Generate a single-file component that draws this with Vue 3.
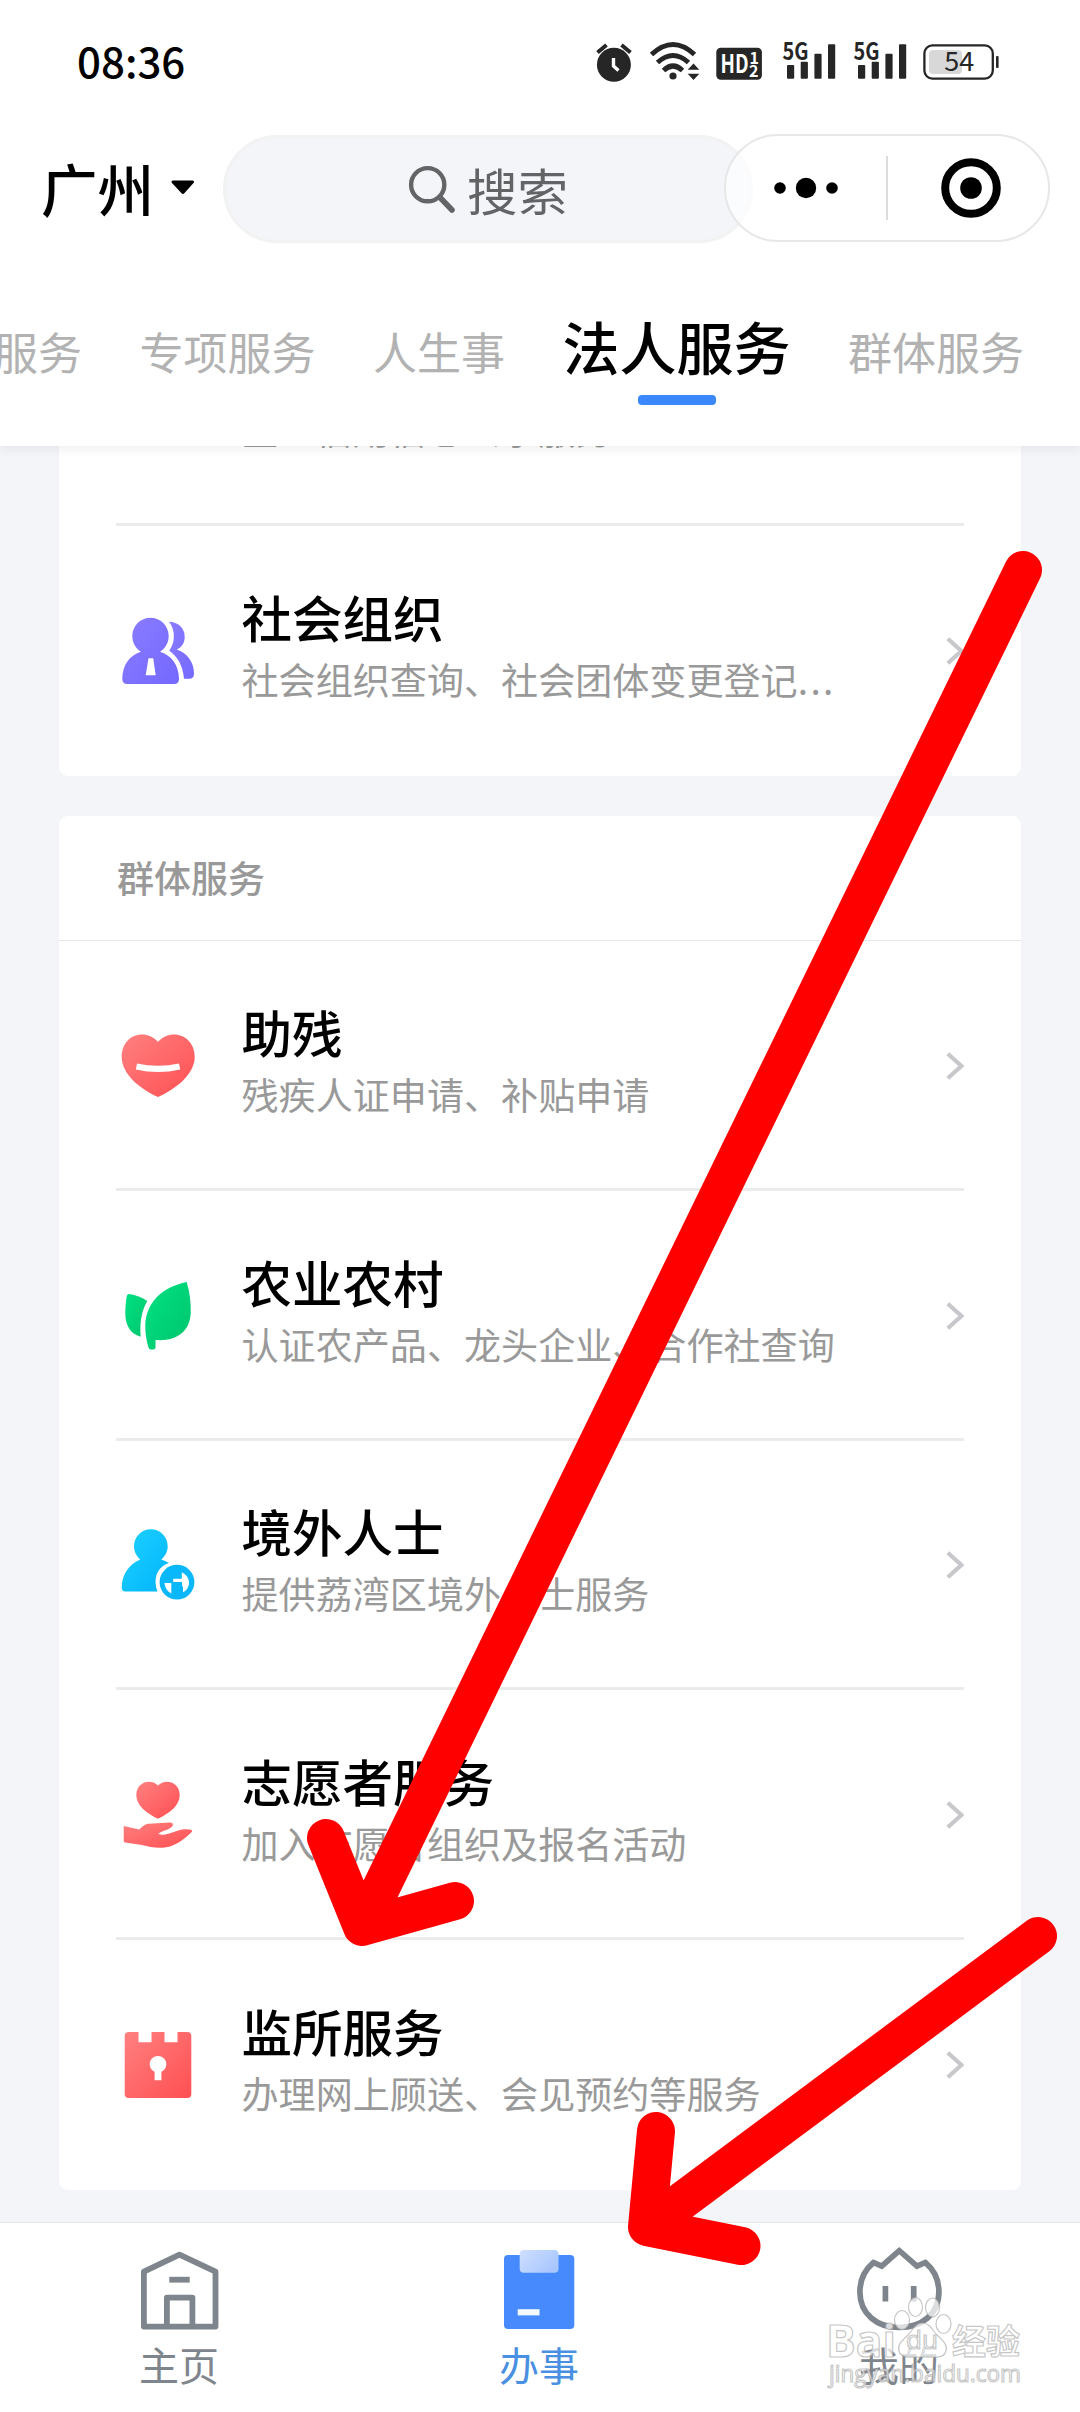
<script setup>
const tabs = [
  { name: '服务' },
  { name: '专项服务' },
  { name: '人生事' },
  { name: '法人服务', active: true },
  { name: '群体服务' },
]

const groups = [
  {
    items: [
      { title: '企业信用', desc: '企业信用信息公示服务' },
      { icon: 'org', title: '社会组织', desc: '社会组织查询、社会团体变更登记', more: true },
    ],
  },
  {
    title: '群体服务',
    items: [
      { icon: 'heart', title: '助残', desc: '残疾人证申请、补贴申请' },
      { icon: 'leaf', title: '农业农村', desc: '认证农产品、龙头企业、合作社查询' },
      { icon: 'abroad', title: '境外人士', desc: '提供荔湾区境外人士服务' },
      { icon: 'volunteer', title: '志愿者服务', desc: '加入志愿者组织及报名活动' },
      { icon: 'prison', title: '监所服务', desc: '办理网上顾送、会见预约等服务' },
    ],
  },
]
</script>

<template>
  <div class="screen">
    <header class="top">
      <div class="status">
        <span class="time">08:36</span>
        <svg class="status-icons" width="420" height="52" viewBox="590 36 420 52" fill="#262626">
          <circle cx="613.9" cy="64.7" r="17" />
          <path d="M597.5 52.5L606.5 45M630.5 52.5L621.5 45" stroke="#262626" stroke-width="4" fill="none" />
          <path d="M613.5 58V66L618.5 70.5" stroke="#fff" stroke-width="3.4" fill="none" />
          <g fill="none" stroke="#262626" stroke-width="5">
            <path d="M651.5 54.5Q673 34.5 694.5 54.5" />
            <path d="M657.5 62.5Q673 48.5 688.5 62.5" />
            <path d="M663.5 70.5Q673 61.5 682.5 70.5" />
          </g>
          <circle cx="673" cy="76" r="3.6" />
          <path d="M693.5 63.5L699.3 69.8H687.7ZM693.5 80L699.3 73.7H687.7Z" />
          <rect x="716.3" y="47.7" width="45.6" height="32" rx="4.5" />
          <g fill="#fff" font-weight="700">
            <text x="720.5" y="73.3" font-size="26" textLength="28" lengthAdjust="spacingAndGlyphs">HD</text>
            <text x="749.5" y="63.5" font-size="16">1</text>
            <text x="749" y="77" font-size="16">2</text>
          </g>
          <g v-for="dx in [0, 71]" :key="dx" :transform="`translate(${dx} 0)`">
            <text x="782.5" y="59.7" font-size="24" font-weight="700" textLength="26" lengthAdjust="spacingAndGlyphs">5G</text>
            <rect x="787" y="65" width="7.2" height="13.7" rx="1" />
            <rect x="800.7" y="61.7" width="7.2" height="17" rx="1" />
            <rect x="814.4" y="53.7" width="7.2" height="25" rx="1" />
            <rect x="828" y="44.3" width="7.2" height="34.4" rx="1" />
          </g>
          <rect x="929" y="50" width="33" height="24" rx="4" fill="#d8d8d8" />
          <rect x="924.4" y="45.4" width="68.4" height="33.2" rx="8" fill="none" stroke="#262626" stroke-width="2.3" />
          <rect x="996" y="56" width="2.6" height="12" rx="1" />
          <text x="959.3" y="71.3" font-size="27" text-anchor="middle">54</text>
        </svg>
      </div>

      <div class="nav">
        <span class="city">广州</span>
        <svg class="caret" width="24" height="15" viewBox="0 0 24 15"><path d="M2 0.5H21.5Q24 1 22.5 3L13.5 13Q12 15 10.3 13L1 3Q-0.5 1 2 0.5Z" fill="#000" /></svg>
        <div class="search">
          <svg width="48" height="48" viewBox="0 0 48 48" fill="none" stroke="#636466" stroke-linecap="round">
            <circle cx="19.7" cy="19.7" r="16.6" stroke-width="4.4" />
            <path d="M32.5 33L44 45" stroke-width="5.6" />
          </svg>
          <span>搜索</span>
        </div>
        <div class="capsule">
          <svg width="54" height="22" viewBox="0 0 54 22"><circle cx="6" cy="11" r="5.8" /><circle cx="32" cy="11" r="10.2" /><circle cx="58" cy="11" r="5.8" /></svg>
          <i class="split"></i>
          <svg width="60" height="60" viewBox="0 0 60 60"><circle cx="30" cy="30" r="25.8" fill="none" stroke="#000" stroke-width="8" /><circle cx="30" cy="30" r="10.8" /></svg>
        </div>
      </div>

      <nav class="tabs">
        <span v-for="t in tabs" :key="t.name" class="tab" :class="{ active: t.active }">{{ t.name }}</span>
      </nav>
    </header>

    <main class="list">
      <section v-for="(g, gi) in groups" :key="gi" class="card">
        <h2 v-if="g.title" class="group-title">{{ g.title }}</h2>
        <div v-for="it in g.items" :key="it.title" class="row">
          <svg class="icon" width="84" height="84" viewBox="0 0 84 84">
            <defs>
              <linearGradient id="violet" x1="0" y1="0" x2="1" y2="1"><stop offset="0" stop-color="#8a7cff" /><stop offset="1" stop-color="#7468ff" /></linearGradient>
              <linearGradient id="red" x1="0" y1="0" x2="1" y2="1"><stop offset="0" stop-color="#ff8080" /><stop offset="1" stop-color="#ff4f52" /></linearGradient>
              <linearGradient id="green" x1="0" y1="0" x2="1" y2="1"><stop offset="0" stop-color="#00e283" /><stop offset="1" stop-color="#00c46c" /></linearGradient>
              <linearGradient id="cyan" x1="0" y1="0" x2="1" y2="1"><stop offset="0" stop-color="#1fd2ff" /><stop offset="1" stop-color="#00b4fc" /></linearGradient>
            </defs>
            <template v-if="it.icon === 'org'">
              <g fill="url(#violet)">
                <path d="M53 12.7C62 13 68.7 19 68.7 27.7C68.7 34 66 38 60.7 40.5C71 44 78 53 78 64.3Q78 69.7 74 69.7H68C67 57 62 48 53.3 41.7C59.5 33 59.5 21 53 12.7Z" />
                <path fill-rule="evenodd" d="M34.5 8.8C44.5 8.8 52.7 17 52.7 27C52.7 34 49 39.5 44 42.8C55 46 63 56 63 70Q63 75 58 75H11.3Q6.3 75 6.3 70C6.3 56 14 46 25 42.8C20 39.5 16.3 34 16.3 27C16.3 17 24.5 8.8 34.5 8.8ZM32.5 49.3L29.7 66.3H39.7L37.2 49.3Z" />
              </g>
            </template>
            <template v-else-if="it.icon === 'heart'">
              <path fill="url(#red)" d="M42 17.7C37 12.5 32 10.5 26 10.5C14 10.5 5.7 20 5.7 33C5.7 50 24 65 42 73C60 65 78.7 50 78.7 33C78.7 20 70 10.5 58 10.5C52 10.5 47 12.5 42 17.7Z" />
              <path fill="#fff" d="M21 39.6Q42 44 63 39.6L64.2 45.4Q42 50.4 19.8 45.4Z" />
            </template>
            <template v-else-if="it.icon === 'leaf'">
              <g fill="url(#green)">
                <path d="M70.7 8C74 19 75 29 74.7 39C74 58 60 67.5 39.5 66V73Q39.5 75.5 37 75.5H35Q33 75.5 32.3 73C30.5 66 29.3 60 29.3 52.7C29.3 29 46 13 70.7 8Z" />
                <path d="M13 20C20 21 26 23.5 31.3 27C25.5 37 23.5 49 24.7 62.7C14 60 9.3 51 9.3 39.3C9.3 33 9.8 27 10.8 22Q11.3 20 13 20Z" />
              </g>
            </template>
            <template v-else-if="it.icon === 'abroad'">
              <path fill="url(#cyan)" d="M34.8 6.3C44.2 6.3 51.7 13.8 51.7 23.2C51.7 29 49 33 45.3 36.4Q49 37.5 53 40C44 43 39.5 50 39.5 59Q39.5 64 41.5 68.5H9.3Q5.7 68.5 5.7 64.5C5.7 52 13 41 24.3 36.5C20.5 33 18 29 18 23.2C18 13.8 25.5 6.3 34.8 6.3Z" />
              <circle cx="61" cy="59.2" r="17.4" fill="#09b8fb" />
              <path fill="#fff" d="M48.4 60H55.3V70.5C51.5 68.5 49 65 48.4 60ZM57.2 55.8H65.8V49.2C70.5 51.5 73 55.2 73 59.5C73 64 70.8 67.5 67 69.3V63.3H66V58.9H57.2Z" />
            </template>
            <template v-else-if="it.icon === 'volunteer'">
              <g fill="url(#red)">
                <path d="M42 12.4C39 9.6 36 8.7 33 8.7C25.5 8.7 20.3 14.5 20.3 22C20.3 33 31 40.5 42 45.7C53 40.5 63.7 33 63.7 22C63.7 14.5 58.5 8.7 51 8.7C48 8.7 45 9.6 42 12.4Z" />
                <path d="M7.7 53L23.3 56.4C27 53.5 28 51.4 32.5 50.8L54 49.4C57.5 49.4 57.5 52.5 55.7 54C52 57.3 46 57.5 42.3 61C46 62.5 50 61.5 54 60.2C59 58.5 64 56.5 68 56.2L74 56.4Q77.5 57.2 75.5 59.3C69 65.5 62 71 54 73.4C44 76 35 74.2 26 72L9 69.5Q7.7 69.3 7.7 68Z" />
              </g>
            </template>
            <template v-else-if="it.icon === 'prison'">
              <path fill="url(#red)" fill-rule="evenodd" d="M12.7 9H22.5V19.3H35.5V9H48.5V19.3H61.5V9H71.3Q75.3 9 75.3 13V71Q75.3 75 71.3 75H12.7Q8.7 75 8.7 71V13Q8.7 9 12.7 9ZM38.6 48.8V57.3H45.4V48.8A8.3 8.3 0 1 0 38.6 48.8Z" />
            </template>
          </svg>
          <div class="texts">
            <div class="title">{{ it.title }}</div>
            <div class="desc">{{ it.desc }}<span v-if="it.more" class="dots">...</span></div>
          </div>
          <svg class="chevron" width="18" height="28" viewBox="0 0 18 28"><path d="M1.8 1.8L15.4 14L1.8 26.2" fill="none" stroke="#c8c8cc" stroke-width="4.2" /></svg>
        </div>
      </section>
    </main>

    <footer class="tabbar">
      <div class="bar-item">
        <svg width="84" height="84" viewBox="0 0 84 84" fill="none" stroke="#7f858c" stroke-width="5.8" stroke-linejoin="round">
          <path d="M41.5 6.6L77.5 23.6V78.6H5.9V23.6Z" />
          <path d="M28.9 78.6V49.6H54.4V78.6" />
          <path d="M31.3 31.7H51.7" />
        </svg>
        <span>主页</span>
      </div>
      <div class="bar-item on">
        <svg width="84" height="84" viewBox="0 0 84 84">
          <defs><linearGradient id="clip" x1="0" y1="0" x2="1" y2="0.6"><stop offset="0" stop-color="#cfdffe" /><stop offset="1" stop-color="#a9c7fe" /></linearGradient></defs>
          <rect x="6" y="7" width="70.3" height="74" rx="4" fill="#468afe" />
          <rect x="21.7" y="2" width="38.8" height="22.8" rx="4" fill="url(#clip)" />
          <rect x="19.7" y="61.2" width="21.8" height="6.2" fill="#f3f9ff" />
        </svg>
        <span>办事</span>
      </div>
      <div class="bar-item">
        <svg class="face" width="84" height="84" viewBox="0 0 84 84" fill="none" stroke="#7f858c" stroke-width="5.7">
          <path d="M41.3 2.7L23.7 18.2L15.5 14.5C6.5 22 1.9 33 1.9 44C1.9 66 19 79.5 41.3 79.5C63.6 79.5 80.9 66 80.9 44C80.9 33 76.3 22 67.3 14.5L59 18.2Z" />
          <path d="M27.4 38V53.4M55.7 38V53.4" />
        </svg>
        <span>我的</span>
      </div>
    </footer>

    <svg class="overlay" width="1080" height="2412" viewBox="0 0 1080 2412">
      <g class="mark">
        <ellipse cx="902" cy="2320" rx="7.5" ry="9.5" />
        <ellipse cx="915.5" cy="2307" rx="7" ry="9.5" />
        <ellipse cx="932.5" cy="2307.5" rx="7" ry="9.5" />
        <ellipse cx="943.5" cy="2324" rx="7.5" ry="9.5" />
        <path d="M922.5 2323C929 2323 932 2329 936 2334C942 2340 948 2344 946 2351C944 2359 934 2357 922.5 2357C911 2357 901 2359 899 2351C897 2344 903 2340 909 2334C913 2329 916 2323 922.5 2323Z" />
        <text x="826" y="2356.500" font-size="44" font-weight="700" textLength="70" lengthAdjust="spacingAndGlyphs">Bai</text>
        <text x="906" y="2349" font-size="25" font-weight="400" textLength="32" lengthAdjust="spacingAndGlyphs">du</text>
        <text class="cjk" x="952" y="2354" font-size="34" font-weight="700">经验</text>
        <text x="829" y="2382" font-size="24" font-weight="400" textLength="192" lengthAdjust="spacingAndGlyphs">jingyan.baidu.com</text>
      </g>
      <g fill="none" stroke="#fe0000" stroke-width="38" stroke-linecap="round" stroke-linejoin="round">
        <path d="M1023 570L362 1927M326 1838L362 1927L455 1901" />
        <path d="M1038 1936L647 2227M656 2131L647 2227L741.500 2246" />
      </g>
    </svg>
  </div>
</template>

<style>
body {
  margin: 0;
  background: #f3f5f9;
}
</style>

<style scoped>
.screen {
  position: relative;
  display: flex;
  flex-direction: column;
  width: 1080px;
  height: 2412px;
  overflow: hidden;
  background: #f3f5f9;
  color: #000;
  font-family: "Noto Sans CJK SC", "Noto Sans", sans-serif;
}
.screen svg {
  display: block;
  flex: none;
}
.top {
  position: relative;
  z-index: 1;
  flex: none;
  box-sizing: border-box;
  height: 446px;
  background: #fff;
  box-shadow: 0 2px 12px rgba(0, 0, 0, 0.08);
}
.status {
  display: flex;
  align-items: center;
  justify-content: space-between;
  height: 124px;
  padding: 0 70px 0 77px;
}
.status .status-icons {
  overflow: visible;
}
.time {
  margin-bottom: 5px;
  font-size: 42px;
  font-weight: 500;
  line-height: 60px;
}
.nav {
  display: flex;
  align-items: center;
  height: 130px;
}
.city {
  width: 117px;
  margin: 0 0 5px 41px;
  font-size: 56.500px;
  font-weight: 500;
  line-height: 80px;
  white-space: nowrap;
}
.caret {
  margin: 0 0 3px 13px;
}
.search {
  display: flex;
  align-items: center;
  flex: none;
  box-sizing: border-box;
  width: 530px;
  height: 108px;
  margin-left: 28px;
  padding-left: 182px;
  border: 3px solid #f2f2f3;
  border-radius: 54px;
  background: #f3f5f9;
  color: #636466;
  font-size: 50.500px;
}
.search span {
  margin-left: 11px;
}
.capsule {
  display: flex;
  align-items: center;
  flex: none;
  box-sizing: border-box;
  width: 326px;
  height: 108px;
  margin: 0 0 2px -29px;
  padding-left: 48px;
  border: 2px solid #e7e7e7;
  border-radius: 54px;
  background: rgba(255, 255, 255, 0.65);
}
.capsule svg {
  overflow: visible;
}
.split {
  width: 2px;
  height: 64px;
  margin: 0 53px 0 58px;
  background: #dcdcdc;
}
.tabs {
  display: flex;
  align-items: baseline;
  gap: 57.500px;
  height: 192px;
  margin-left: -6px;
  padding-top: 49px;
  box-sizing: border-box;
  white-space: nowrap;
}
.tab {
  color: #b2b2b2;
  font-size: 44px;
  line-height: 84px;
}
.tab.active {
  position: relative;
  color: #000;
  font-size: 57px;
  font-weight: 500;
}
.tab.active::after {
  content: "";
  position: absolute;
  bottom: -18px;
  left: 50%;
  width: 78px;
  height: 10px;
  margin-left: -39px;
  border-radius: 4px;
  background: #3a88fb;
}
.list {
  display: flex;
  flex-direction: column;
  gap: 40px;
  flex: 1;
  min-height: 0;
  margin-top: -169.600px;
  padding: 0 59px;
}
.card {
  flex: none;
  border-radius: 9px;
  background: #fff;
}
.group-title {
  box-sizing: border-box;
  height: 125px;
  margin: 0;
  padding-left: 58px;
  border-bottom: 1px solid #e8e8e8;
  color: #999;
  font-size: 37px;
  font-weight: 500;
  line-height: 123px;
}
.row {
  display: flex;
  align-items: center;
  box-sizing: border-box;
  height: 249.800px;
  margin: 0 57px;
  padding-top: 3px;
  border-bottom: 3px solid #ebebeb;
}
.row:last-child {
  border-bottom-color: transparent;
}
.texts {
  flex: 1;
  margin: 0 0 5px 41.500px;
  white-space: nowrap;
}
.title {
  font-size: 50.500px;
  font-weight: 500;
  line-height: 62px;
}
.desc {
  color: #999;
  font-size: 37.100px;
  line-height: 65px;
}
.dots {
  letter-spacing: 2.400px;
}
.tabbar {
  position: relative;
  display: flex;
  flex: none;
  box-sizing: border-box;
  height: 190px;
  border-top: 1px solid #e6e6e6;
  background: #fff;
}
.bar-item {
  display: flex;
  flex: 1;
  flex-direction: column;
  align-items: center;
  padding-top: 25px;
  color: #7f858c;
  font-size: 40px;
  line-height: 60px;
}
.bar-item span {
  margin: 2px 2px 0 0;
}
.bar-item.on {
  color: #4a90e2;
}
.face {
  overflow: visible;
}
.overlay {
  position: absolute;
  z-index: 2;
  top: 0;
  left: 0;
}
.mark {
  fill: rgba(255, 255, 255, 0.72);
  stroke: rgba(160, 160, 160, 0.6);
  stroke-width: 1.2;
  font-family: "Open Sans", "Noto Sans", sans-serif;
}
.mark .cjk {
  font-family: "Noto Sans CJK SC", sans-serif;
}
</style>
